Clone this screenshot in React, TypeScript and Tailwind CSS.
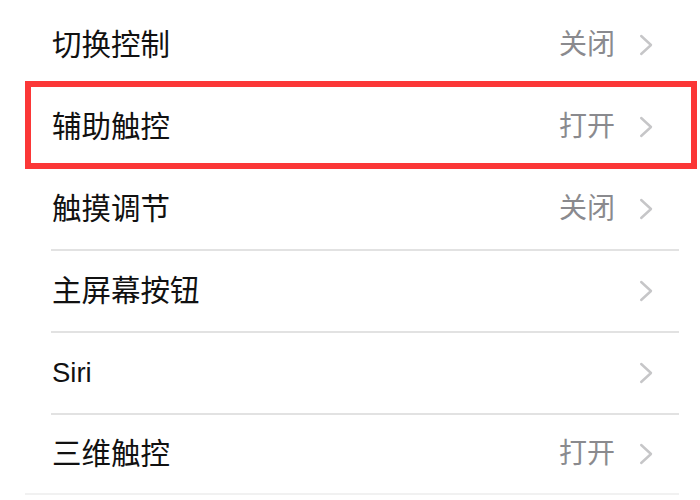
import React from "react";

type Row = { label: string; value?: string; last?: boolean; latin?: boolean };

const rows: Row[] = [
  { label: "切换控制", value: "关闭" },
  { label: "辅助触控", value: "打开" },
  { label: "触摸调节", value: "关闭" },
  { label: "主屏幕按钮" },
  { label: "Siri", latin: true },
  { label: "三维触控", value: "打开", last: true },
];

function Chevron() {
  return (
    <svg width="14" height="22" viewBox="0 0 14 22" className="shrink-0">
      <path
        d="M2.2 2 L12 11 L2.2 20"
        fill="none"
        stroke="#c6c6c8"
        strokeWidth="2.4"
        strokeLinecap="round"
        strokeLinejoin="round"
      />
    </svg>
  );
}

export default function App() {
  return (
    <div
      className="relative w-[700px] h-[500px] bg-white overflow-hidden pt-[5px]"
      style={{ fontFamily: '"Liberation Sans", "Noto Sans CJK SC", sans-serif' }}
    >
      {rows.map((r, i) => (
        <div key={i}>
          <div
            className={`flex items-center pl-[52px] pr-[47px] ${r.last ? "h-[78px]" : "h-[80px]"}`}
          >
            <div
              className={`flex-1 leading-none text-[#111111] ${r.latin ? "text-[27.5px]" : "text-[29.5px]"}`}
            >
              {r.label}
            </div>
            {r.value && (
              <div className="mr-[24px] text-[28px] leading-none text-[#8a8a8e]">
                {r.value}
              </div>
            )}
            <Chevron />
          </div>
          {r.last ? (
            <div className="ml-[25px] mr-[21px] h-[2px] bg-[#f1f1f1]" />
          ) : (
            <div className="ml-[51px] mr-[21px] h-[2px] bg-[#e2e2e2]" />
          )}
        </div>
      ))}
      <div className="absolute left-[25px] top-[81px] w-[672px] h-[88px] border-[6px] border-[#fb3737]" />
    </div>
  );
}
